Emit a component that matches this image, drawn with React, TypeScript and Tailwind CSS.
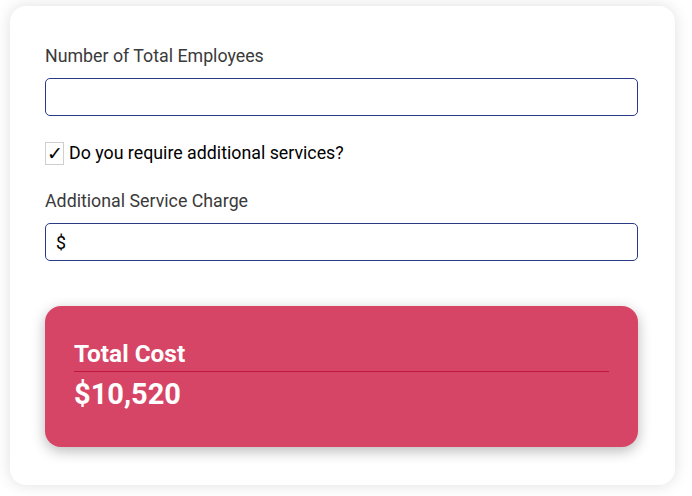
import { useState } from 'react';

export default function App() {
  const [employees, setEmployees] = useState('');
  const [extra, setExtra] = useState(true);
  const [charge, setCharge] = useState('$');

  return (
    <div className="min-h-screen bg-white pt-[6px] pl-[10px] font-['Roboto','Liberation_Sans',sans-serif]">
      <div className="w-[665px] rounded-2xl bg-white px-[35px] pt-[38px] pb-[38px] shadow-[0_0_16px_rgba(0,0,0,0.13)]">
        <label className="block text-[17.8px] leading-6 text-[#3a3a3a]">Number of Total Employees</label>
        <input
          value={employees}
          onChange={(e) => setEmployees(e.target.value)}
          className="mt-[10px] block h-[38px] w-[593px] rounded-[5px] border border-[#2b3a85] px-[10px] text-[17.8px] outline-none"
        />

        <label className="mt-[25px] flex h-6 items-center gap-[5px] text-[17.8px] text-black">
          <span
            onClick={() => setExtra(!extra)}
            className="flex h-[23px] w-[19px] items-center justify-center border border-[#cfcfcf] text-[19px] leading-none"
          >
            {extra ? '✓' : ''}
          </span>
          Do you require additional services?
        </label>

        <label className="mt-[24px] block text-[17.8px] leading-6 text-[#3a3a3a]">Additional Service Charge</label>
        <input
          value={charge}
          onChange={(e) => setCharge(e.target.value)}
          className="mt-[10px] block h-[38px] w-[593px] rounded-[5px] border border-[#2b3a85] px-[10px] text-[17.8px] text-black outline-none"
        />

        <div className="mt-[45px] h-[141px] w-[593px] rounded-2xl bg-[#d74566] px-[29px] pt-[34px] shadow-[0_4px_14px_rgba(0,0,0,0.28)]">
          <div className="border-b border-[#c0163f] pb-[3px] text-[24.4px] leading-[28px] font-bold text-white">Total Cost</div>
          <div className="mt-[5px] text-[29px] leading-[34px] font-bold text-white">$10,520</div>
        </div>
      </div>
    </div>
  );
}
